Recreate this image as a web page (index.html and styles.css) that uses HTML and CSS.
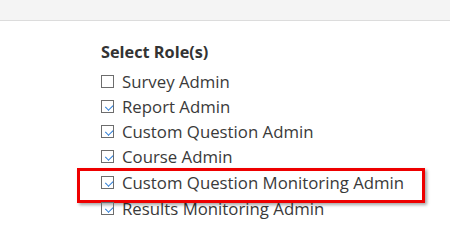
FILE: index.html
```html
<!DOCTYPE html>
<html lang="en">
<head>
    <meta charset="UTF-8">
    <title>Select Role(s)</title>
    <link rel="stylesheet" href="styles.css">
</head>
<body>
<div class="topbar"></div>

<div class="roles">
    <h2>Select Role(s)</h2>
    <ul class="role-list">
        <li><label><input type="checkbox"><span class="box"></span>Survey Admin</label></li>
        <li><label><input type="checkbox" checked><span class="box"></span>Report Admin</label></li>
        <li><label><input type="checkbox" checked><span class="box"></span>Custom Question Admin</label></li>
        <li><label><input type="checkbox" checked><span class="box"></span>Course Admin</label></li>
        <li class="highlight"><label><input type="checkbox" checked><span class="box"></span>Custom Question Monitoring Admin</label></li>
        <li><label><input type="checkbox" checked><span class="box"></span>Results Monitoring Admin</label></li>
    </ul>
</div>
</body>
</html>
```

FILE: styles.css
```css
* {
    margin: 0;
    padding: 0;
    box-sizing: border-box;
}

body {
    font-family: 'Open Sans', 'Noto Sans', sans-serif;
    background: #fff;
    color: #333;
    overflow: hidden;
}

.topbar {
    height: 21px;
    background: #f4f4f4;
    border-bottom: 1px solid #dcdcdc;
}

.roles {
    padding: 20px 0 0 101px;
}

h2 {
    font-size: 16.3px;
    font-weight: 700;
    line-height: 22px;
    margin-bottom: 6px;
    color: #333;
}

.role-list {
    list-style: none;
}

.role-list li {
    height: 25px;
    display: flex;
    align-items: center;
}

.role-list label {
    display: flex;
    align-items: center;
    font-size: 16.8px;
    color: #3a3a3a;
}

.role-list input {
    display: none;
}

.box {
    width: 13px;
    height: 13px;
    border: 1px solid #6d6d6d;
    margin-right: 8px;
    position: relative;
}

input:checked + .box::after {
    content: '';
    position: absolute;
    left: 3px;
    top: 1px;
    width: 6px;
    height: 4px;
    border-left: 1px solid #2a7bd5;
    border-bottom: 1px solid #2a7bd5;
    transform: rotate(-45deg) translate(-1px, 2px);
}

.role-list li.highlight {
    position: relative;
    margin-top: 1px;
    margin-bottom: 1px;
}

.highlight::before {
    content: '';
    position: absolute;
    left: -24px;
    top: -2px;
    width: 342px;
    height: 29px;
    border: 3px solid #ee0000;
    box-shadow: 2px 2px 3px rgba(0,0,0,0.35);
}
```
